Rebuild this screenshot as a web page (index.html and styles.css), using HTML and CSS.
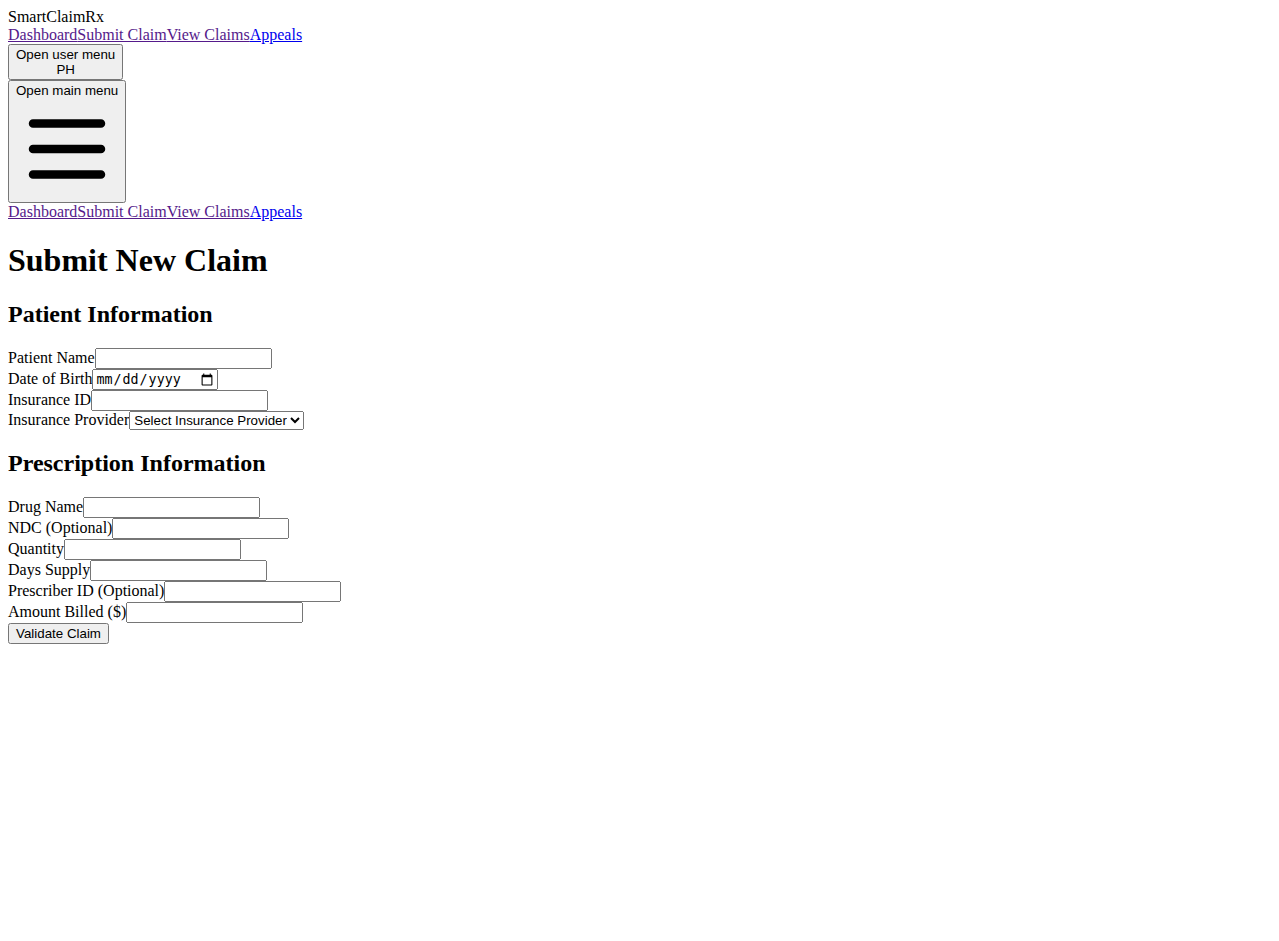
FILE: index.html
```html
<!DOCTYPE html>
<html lang="en">
<head>
<meta charset="utf-8">
<title>SmartClaimRx</title>
<link rel="stylesheet" href="styles.css">
</head>
<body class="page">
<nav class="topnav">
  <div class="brand">SmartClaimRx</div>
  <div class="links">
    <a class="link visited" href="#">Dashboard</a><a class="link visited" href="#">Submit Claim</a><a class="link visited" href="#">View Claims</a><a class="link" href="#">Appeals</a>
  </div>
  <div>
    <button class="btn" type="button"><span>Open user menu</span><div>PH</div></button>
  </div>
  <div>
    <button class="btn" type="button"><span>Open main menu</span>
      <svg class="burger" viewBox="0 0 24 24" fill="none" stroke="currentColor" stroke-width="2" stroke-linecap="round"><path d="M4 6h16M4 12h16M4 18h16"/></svg>
    </button>
  </div>
  <div class="links">
    <a class="link visited" href="#">Dashboard</a><a class="link visited" href="#">Submit Claim</a><a class="link visited" href="#">View Claims</a><a class="link" href="#">Appeals</a>
  </div>
</nav>
<main>
  <h1 class="title">Submit New Claim</h1>
  <form>
    <h2 class="section">Patient Information</h2>
    <div><label>Patient Name</label><input class="field" type="text"></div>
    <div><label>Date of Birth</label><input type="date"></div>
    <div><label>Insurance ID</label><input class="field" type="text"></div>
    <div><label>Insurance Provider</label><select><option>Select Insurance Provider</option></select></div>
    <h2 class="section">Prescription Information</h2>
    <div><label>Drug Name</label><input class="field" type="text"></div>
    <div><label>NDC (Optional)</label><input class="field" type="text"></div>
    <div><label>Quantity</label><input class="field" type="text"></div>
    <div><label>Days Supply</label><input class="field" type="text"></div>
    <div><label>Prescriber ID (Optional)</label><input class="field" type="text"></div>
    <div><label>Amount Billed ($)</label><input class="field" type="text"></div>
    <button class="btn" type="button">Validate Claim</button>
  </form>
</main>
</body>
</html>
```
FILE: styles.css
```css
.page {
  margin: 8px;
  font-family: "Liberation Serif", serif;
  font-size: 16px;
  color: #000;
}
.link { color: #0000ee; }
.link.visited { color: #551a8b; }
.btn { font-family: "Liberation Sans", Arial, sans-serif; }
.burger { display: block; width: 102px; height: 102px; color: #000; }
.title { font-size: 2em; margin: 0.67em 0; }
.section { font-size: 1.5em; margin: 0.83em 0; }
.field { box-sizing: border-box; width: 177px; }
```
